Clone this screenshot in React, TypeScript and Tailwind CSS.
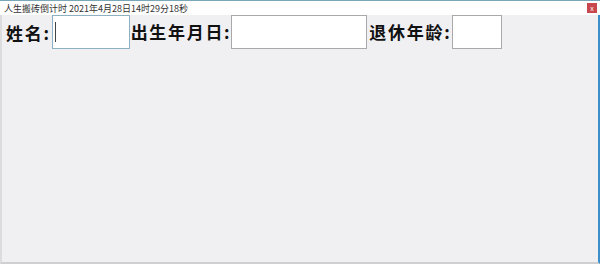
import type { ReactNode } from 'react'

const Label = ({ children }: { children: ReactNode }) => (
  <span className="whitespace-nowrap text-[17px] font-bold leading-none tracking-[1.7px] text-[#111]">{children}</span>
)

export default function App() {
  return (
    <div
      className="flex h-[264px] w-[600px] flex-col overflow-hidden bg-white"
      style={{ fontFamily: '"Noto Sans CJK SC", "Noto Sans", sans-serif' }}
    >
      {/* title bar */}
      <div className="flex h-[15px] items-center justify-between border-t border-[#7aa7b8] bg-white pl-[4px] pr-[3px]">
        <span className="text-[9px] leading-none text-[#333]">人生搬砖倒计时 2021年4月28日14时29分18秒</span>
        <button
          type="button"
          className="flex h-[10px] w-[10px] items-center justify-center bg-[#c8474c] text-[7px] leading-none text-white"
        >
          x
        </button>
      </div>

      {/* body */}
      <div className="flex flex-1 border-b-2 border-l-2 border-r-2 border-b-[#cfcfd2] border-l-[#dcdcde] border-r-[#3d8fc9] bg-[#f0eff2]">
        <div className="flex h-[34px] items-center pl-[4px]">
          <Label>姓名:</Label>
          <div className="ml-[1px] flex h-[34px] w-[78px] items-center border border-[#8db0c2] bg-white pl-[2px]">
            <span className="h-[20px] w-[1px] bg-[#444]" />
          </div>
          <span className="ml-[1px]">
            <Label>出生年月日:</Label>
          </span>
          <div className="h-[34px] w-[136px] border border-[#a9a9ab] bg-white" />
          <span className="ml-[2px]">
            <Label>退休年龄:</Label>
          </span>
          <div className="ml-[1px] h-[34px] w-[50px] border border-[#a9a9ab] bg-white" />
        </div>
      </div>
    </div>
  )
}
